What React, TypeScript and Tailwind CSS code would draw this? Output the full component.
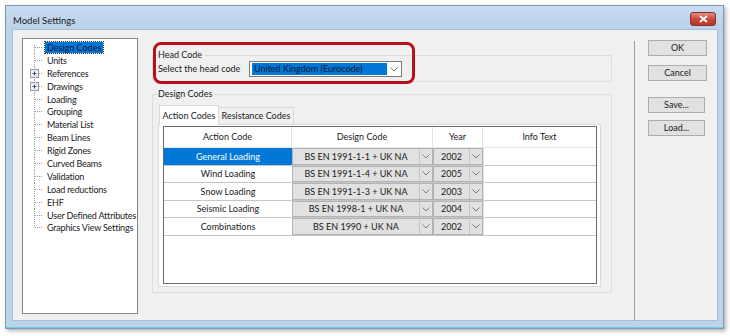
import React from "react";

const treeItems = [
    { label: "Design Codes", selected: true },
    { label: "Units" },
    { label: "References", plus: true },
    { label: "Drawings", plus: true },
    { label: "Loading" },
    { label: "Grouping" },
    { label: "Material List" },
    { label: "Beam Lines" },
    { label: "Rigid Zones" },
    { label: "Curved Beams" },
    { label: "Validation" },
    { label: "Load reductions" },
    { label: "EHF" },
    { label: "User Defined Attributes" },
    { label: "Graphics View Settings" },
];

const rows = [
    ["General Loading", "BS EN 1991-1-1 + UK NA", "2002"],
    ["Wind Loading", "BS EN 1991-1-4 + UK NA", "2005"],
    ["Snow Loading", "BS EN 1991-1-3 + UK NA", "2003"],
    ["Seismic Loading", "BS EN 1998-1 + UK NA", "2004"],
    ["Combinations", "BS EN 1990 + UK NA", "2002"],
];

const Chevron = () => (
    <svg width="8" height="5" viewBox="0 0 8 5">
        <path d="M0.5 0.5 L4 4 L7.5 0.5" fill="none" stroke="#7b7b7b" strokeWidth="1" />
    </svg>
);

const TreeRow = ({ label, first, last, plus, selected }: { label: string; first?: boolean; last?: boolean; plus?: boolean; selected?: boolean }) => (
    <div className="flex h-[12.9px] items-center">
        <svg width="21" height="13" className="shrink-0">
            <line x1="11.5" y1={first ? 4 : 0} x2="11.5" y2={last ? 6.5 : 13} stroke="#9a9a9a" strokeDasharray="1 1" />
            <line x1="12" y1="6.5" x2="20" y2="6.5" stroke="#9a9a9a" strokeDasharray="1 1" />
            {plus && (
                <g>
                    <rect x="7.5" y="2.5" width="8" height="8" fill="#eef2f7" stroke="#8f9aa6" />
                    <line x1="9.5" y1="6.5" x2="13.5" y2="6.5" stroke="#3b4f73" />
                    <line x1="11.5" y1="4.5" x2="11.5" y2="8.5" stroke="#3b4f73" />
                </g>
            )}
        </svg>
        <span
            className={
                selected
                    ? "ml-[1px] px-[2px] h-[11px] leading-[11px] bg-[#0078d7] text-[#0a1633] outline-1 outline-dotted outline-[#333] whitespace-nowrap"
                    : "ml-[1px] px-[2px] leading-[11px] whitespace-nowrap tracking-[-0.2px]"
            }
        >
            {label}
        </span>
    </div>
);

const Button = ({ label, w }: { label: string; w: string }) => (
    <div className={`${w} h-[16px] flex items-center justify-center bg-[#e1e1e1] border border-[#adadad]`}>{label}</div>
);

const DropCell = ({ text, w }: { text: string; w: string }) => (
    <div className={`${w} flex h-full border border-[#b3b3b3] bg-[#e1e1e1]`}>
        <div className="flex-1 flex items-center justify-center">{text}</div>
        <div className="w-[13px] flex items-center justify-center border-l border-[#c4c4c4]">
            <Chevron />
        </div>
    </div>
);

export default function App() {
    return (
        <div className="w-[730px] h-[336px] bg-white font-['Lato','Noto_Sans',sans-serif] text-[9px] text-[#1a1a1a] pt-[5px] pl-[5px]">
            {/* window */}
            <div className="w-[719px] h-[324px] flex flex-col bg-[#bcd3ea] border border-[#8197ad] shadow-[2px_2px_4px_rgba(0,0,0,0.3)]">
                {/* title bar */}
                <div className="h-[23px] flex items-start justify-between bg-gradient-to-b from-[#c9ddf2] to-[#b9d1ea]">
                    <div className="pl-[7px] pt-[9px] text-[9.5px] leading-[12px] text-[#1b1b1b]">Model Settings</div>
                    <div className="mt-[6px] mr-[7px] w-[26px] h-[14px] rounded-[3px] border border-[#8a2e2e] bg-gradient-to-b from-[#e08c7f] via-[#c9493c] to-[#b8372b] flex items-center justify-center">
                        <svg width="9" height="8" viewBox="0 0 9 8">
                            <path d="M1 1 L8 7 M8 1 L1 7" stroke="white" strokeWidth="1.8" />
                        </svg>
                    </div>
                </div>
                {/* client */}
                <div className="ml-[6px] mr-[5px] h-[292px] bg-[#f0f0f0] border border-[#a8bfd8] flex">
                    {/* tree */}
                    <div className="ml-[9px] mt-[8px] w-[116px] h-[276px] bg-white border border-[#828790] pt-[2px] overflow-hidden">
                        {treeItems.map((t, i) => (
                            <TreeRow key={t.label} {...t} first={i === 0} last={i === treeItems.length - 1} />
                        ))}
                    </div>
                    {/* main */}
                    <div className="ml-[14px] w-[460px] flex flex-col">
                        <div className="relative mt-[19px]">
                            <fieldset className="w-[460px] border border-[#dcdcdc] rounded-[2px] pl-[5px] pb-[4px]">
                                <legend className="leading-[12px] pr-[2px]">Head Code</legend>
                                <div className="flex h-[16px] items-center">
                                    <span className="w-[91px]">Select the head code</span>
                                    <div className="w-[153px] h-[16px] bg-white border border-[#7a7a7a] flex items-center pl-[2px]">
                                        <div className="w-[135px] h-[12px] bg-[#0078d7] text-[#0a1633] leading-[12px] pl-[2px]">United Kingdom (Eurocode)</div>
                                        <div className="flex-1 flex justify-center">
                                            <Chevron />
                                        </div>
                                    </div>
                                </div>
                            </fieldset>
                            <div className="absolute left-[1px] top-[-7px] w-[262px] h-[42px] border-[3px] border-[#b5121b] rounded-[8px]"></div>
                        </div>
                        <fieldset className="mt-[6px] w-[460px] border border-[#dcdcdc] rounded-[2px] pl-[5px] pr-[10px] pb-[5px]">
                            <legend className="leading-[12px] pr-[2px]">Design Codes</legend>
                            <div className="mt-[4px] flex items-end h-[20px]">
                                <div className="ml-[1px] w-[60px] h-[20px] bg-white border border-b-0 border-[#d9d9d9] flex items-center justify-center relative top-[1px]">Action Codes</div>
                                <div className="w-[75px] h-[17px] bg-[#f0f0f0] border border-l-0 border-b-0 border-[#d9d9d9] flex items-center justify-center">Resistance Codes</div>
                            </div>
                            <div className="w-[443px] h-[163px] bg-white border border-[#d9d9d9] pl-[4px] pt-[1px]">
                                <div className="w-[434px] h-[158px] border border-[#6a6a6a] flex flex-col">
                                    <div className="flex h-[21px] border-b border-[#e6e6e6]">
                                        <div className="w-[128px] flex items-center justify-center border-r border-[#e3e3e3]">Action Code</div>
                                        <div className="w-[141px] flex items-center justify-center border-r border-[#e3e3e3]">Design Code</div>
                                        <div className="w-[50px] flex items-center justify-center border-r border-[#e3e3e3]">Year</div>
                                        <div className="flex-1 flex items-center justify-center">Info Text</div>
                                    </div>
                                    {rows.map((r, i) => (
                                        <div key={r[0]} className="flex h-[17.6px] border-b border-[#c6c6c6]">
                                            <div
                                                className={
                                                    i === 0
                                                        ? "w-[128px] flex items-center justify-center bg-[#0078d7] text-white"
                                                        : "w-[128px] flex items-center justify-center"
                                                }
                                            >
                                                {r[0]}
                                            </div>
                                            <DropCell text={r[1]} w="w-[141px]" />
                                            <DropCell text={r[2]} w="w-[50px]" />
                                            <div className="flex-1 border-l border-[#e3e3e3]"></div>
                                        </div>
                                    ))}
                                </div>
                            </div>
                        </fieldset>
                    </div>
                    {/* separator */}
                    <div className="ml-[22px] mt-[11px] w-px h-[280px] bg-[#a0a0a0]"></div>
                    {/* buttons */}
                    <div className="ml-[13px] mt-[10px] flex flex-col">
                        <Button label="OK" w="w-[59px]" />
                        <div className="h-[9px]"></div>
                        <Button label="Cancel" w="w-[59px]" />
                        <div className="h-[16px]"></div>
                        <Button label="Save..." w="w-[57px]" />
                        <div className="h-[7px]"></div>
                        <Button label="Load..." w="w-[57px]" />
                    </div>
                </div>
                <div className="flex-1 border-b border-[#5fd0ee]"></div>
            </div>
        </div>
    );
}
